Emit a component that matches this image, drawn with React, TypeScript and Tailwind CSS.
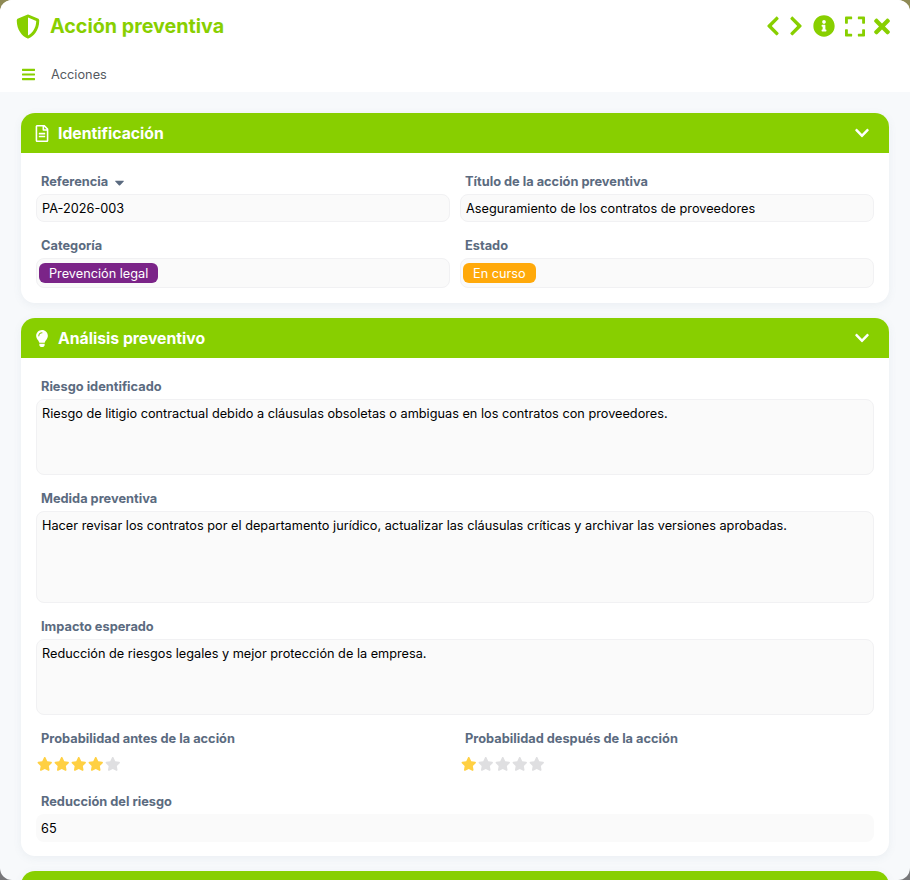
import React from "react";
import { FaShieldAlt, FaRegFileAlt, FaLightbulb, FaChevronDown, FaChevronLeft, FaChevronRight, FaInfoCircle, FaExpand, FaTimes, FaBars, FaStar, FaCaretDown } from "react-icons/fa";

function Label({ children }: { children: React.ReactNode }) {
  return <div className="h-4 pt-[2px] pl-[5px] mb-[5px] flex items-center text-[12.8px] leading-4 font-bold text-[#5b6b80]">{children}</div>;
}

function Box({ h, children, border = true }: { h: string; children: React.ReactNode; border?: boolean }) {
  return (
    <div className={`${h} ${border ? "border border-[#f1f1f3]" : ""} rounded-lg bg-[#fafafa] px-[5px] text-[12.72px] text-black`}>
      {children}
    </div>
  );
}

function Stars({ n }: { n: number }) {
  return (
    <div className="h-[27px] flex items-start pt-[6px] pl-[1px] gap-[1.5px]">
      {[0, 1, 2, 3, 4].map((i) => (
        <FaStar key={i} className={`w-[15.5px] h-[14px] ${i < n ? "text-[#ffd043]" : "text-[#dfdfe1]"}`} />
      ))}
    </div>
  );
}

function Section({ icon, title, children }: { icon: React.ReactNode; title: string; children?: React.ReactNode }) {
  return (
    <section className="rounded-[14px] bg-white shadow-[0_2px_8px_rgba(90,110,140,0.08)]">
      <div className="h-10 rounded-t-[14px] bg-[#88cf00] flex items-center pl-[14px] pr-[19px] text-white">
        <span className="w-[23px] flex">{icon}</span>
        <span className="text-[15.75px] font-bold pt-[2px]">{title}</span>
        <FaChevronDown className="ml-auto w-[16px] h-[16px]" />
      </div>
      {children}
    </section>
  );
}

export default function App() {
  return (
    <div className="w-[910px] h-[880px] bg-gradient-to-b from-[#8f8a55] to-[#77777a]" style={{ fontFamily: "Inter, sans-serif" }}>
      <div className="w-full h-full rounded-xl overflow-hidden bg-[#f7f9fb] flex flex-col">
        <header className="h-[92px] shrink-0 bg-white">
          <div className="h-[52px] flex items-center pl-[15.5px] pr-[20px] text-[#88cf00]">
            <FaShieldAlt className="w-[24px] h-[25px]" />
            <span className="ml-[10.5px] text-[19.7px] font-bold pt-[2px]">Acción preventiva</span>
            <div className="ml-auto flex items-center">
              <FaChevronLeft className="w-[14px] h-[22px]" />
              <FaChevronRight className="ml-[9px] w-[14px] h-[22px]" />
              <FaInfoCircle className="ml-[10px] w-[22px] h-[22px]" />
              <FaExpand className="ml-[10px] w-[20px] h-[23px]" />
              <FaTimes className="ml-[9px] w-[16px] h-[23px]" />
            </div>
          </div>
          <div className="h-[22px] mt-[11px] pl-[22px] flex items-center text-[12.75px]">
            <FaBars className="w-[13px] h-[15px] text-[#88cf00]" />
            <span className="ml-[16px] text-[#55595f] pt-[2px]">Acciones</span>
          </div>
        </header>
        <main className="flex-1 min-h-0 px-[21px] pt-[21px] flex flex-col gap-[15px]">
          <Section icon={<FaRegFileAlt className="w-[14px] h-[17px]" />} title="Identificación">
            <div className="px-[15px] pt-5 pb-[15px] grid grid-cols-2 gap-x-[10px] gap-y-[15px]">
              <div>
                <Label>Referencia<FaCaretDown className="ml-[6px] w-[11px] h-[15px]" /></Label>
                <Box h="h-7 leading-[28px]">PA-2026-003</Box>
              </div>
              <div>
                <Label>Título de la acción preventiva</Label>
                <Box h="h-7 leading-[28px]">Aseguramiento de los contratos de proveedores</Box>
              </div>
              <div>
                <Label>Categoría</Label>
                <Box h="h-[30px] !px-[2px] flex items-center">
                  <span className="h-5 pl-[10px] pr-[9.5px] rounded-md bg-[#7b2488] text-white leading-[21px]">Prevención legal</span>
                </Box>
              </div>
              <div>
                <Label>Estado</Label>
                <Box h="h-[30px] !px-[2px] flex items-center">
                  <span className="h-5 px-[10px] rounded-md bg-[#ffa90a] text-white leading-[21px]">En curso</span>
                </Box>
              </div>
            </div>
          </Section>
          <Section icon={<FaLightbulb className="w-[14px] h-[17px]" />} title="Análisis preventivo">
            <div className="px-[15px] pt-5 pb-[14px] grid grid-cols-2 gap-x-[10px] gap-y-[15px]">
              <div className="col-span-2">
                <Label>Riesgo identificado</Label>
                <Box h="h-[76px] pt-[6px] leading-4">Riesgo de litigio contractual debido a cláusulas obsoletas o ambiguas en los contratos con proveedores.</Box>
              </div>
              <div className="col-span-2">
                <Label>Medida preventiva</Label>
                <Box h="h-[92px] pt-[6px] leading-4">Hacer revisar los contratos por el departamento jurídico, actualizar las cláusulas críticas y archivar las versiones aprobadas.</Box>
              </div>
              <div className="col-span-2">
                <Label>Impacto esperado</Label>
                <Box h="h-[76px] pt-[6px] leading-4">Reducción de riesgos legales y mejor protección de la empresa.</Box>
              </div>
              <div>
                <Label>Probabilidad antes de la acción</Label>
                <Stars n={4} />
              </div>
              <div>
                <Label>Probabilidad después de la acción</Label>
                <Stars n={1} />
              </div>
              <div className="col-span-2">
                <Label>Reducción del riesgo</Label>
                <Box h="h-7 leading-[30px]" border={false}>65</Box>
              </div>
            </div>
          </Section>
          <Section icon={null} title="" />
        </main>
      </div>
    </div>
  );
}
